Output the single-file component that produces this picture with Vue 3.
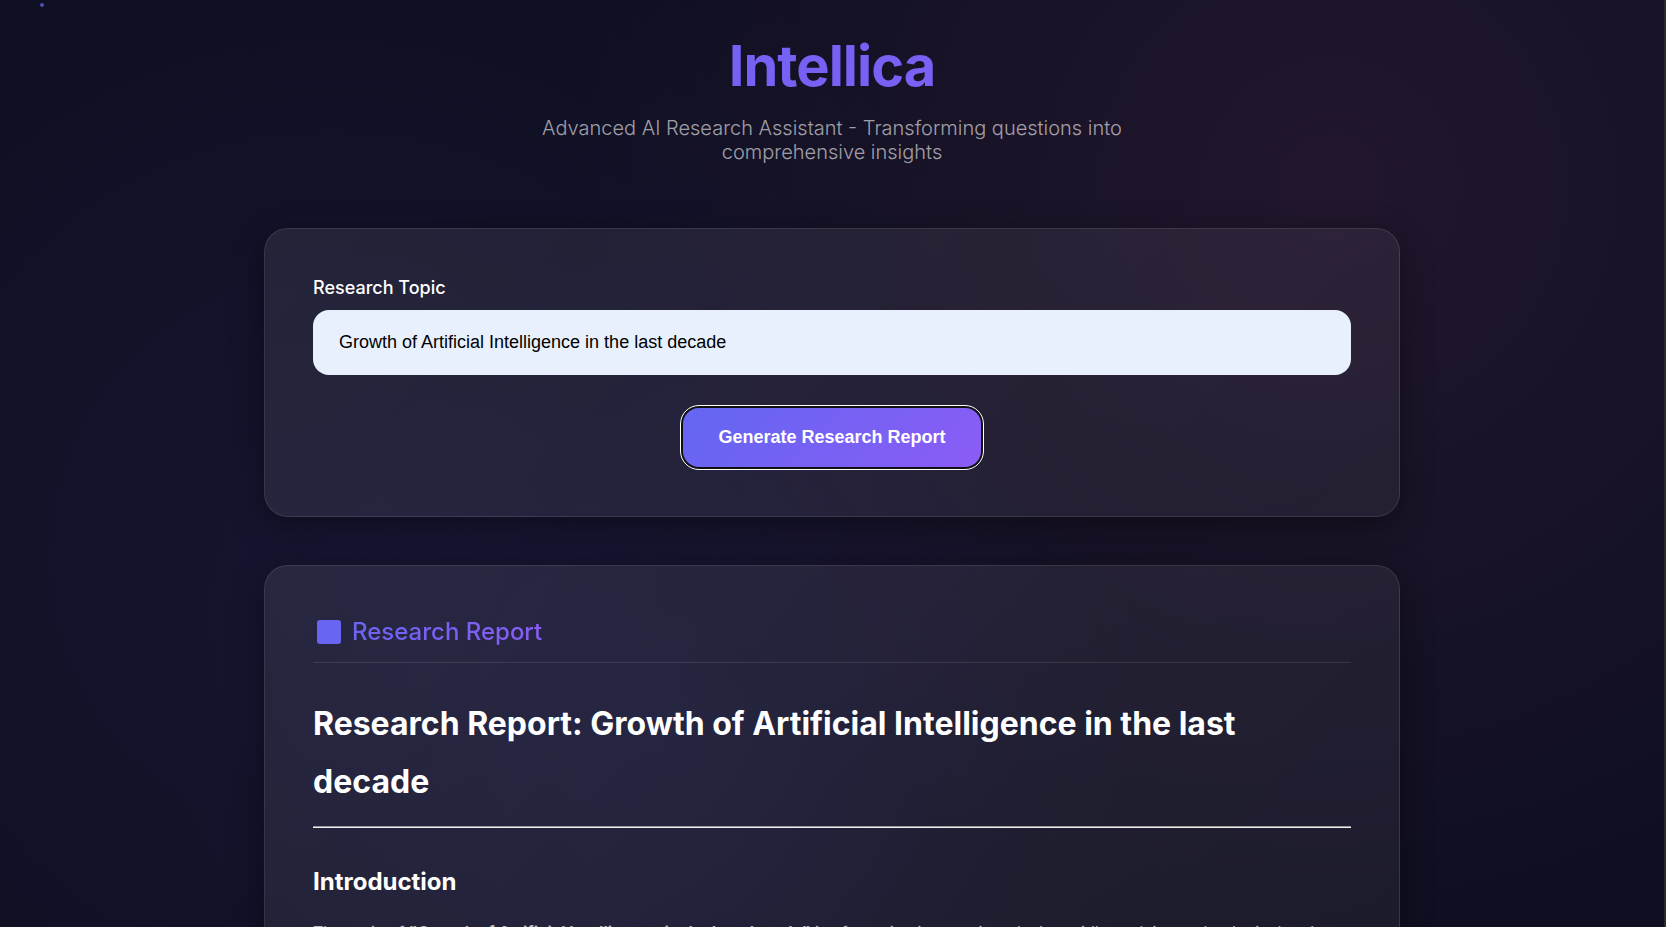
<script setup>
import { ref } from 'vue'

const topic = ref('Growth of Artificial Intelligence in the last decade')
</script>

<template>
  <div class="page">
    <span class="particle" aria-hidden="true"></span>
    <main class="container">
      <header class="hero">
        <h1 class="brand">Intellica</h1>
        <p class="tagline">Advanced AI Research Assistant - Transforming questions into comprehensive insights</p>
      </header>

      <section class="card">
        <form @submit.prevent>
          <label class="label" for="topic">Research Topic</label>
          <input id="topic" v-model="topic" class="topic" type="text" />
          <div class="actions">
            <button class="generate" type="submit">Generate Research Report</button>
          </div>
        </form>
      </section>

      <section class="card">
        <div class="report-header">
          <h2 class="report-title"><span class="report-icon" aria-hidden="true"></span>Research Report</h2>
        </div>
        <article class="report">
          <h1>Research Report: Growth of Artificial Intelligence in the last decade</h1>
          <hr />
          <h2>Introduction</h2>
          <p>The topic of <strong>"Growth of Artificial Intelligence in the last decade"</strong> is of growing interest in today's rapidly evolving technological and</p>
        </article>
      </section>
    </main>
  </div>
</template>

<style>
html,
body {
  height: 100%;
  overflow: hidden;
  background: #0f0f23;
}
</style>

<style scoped>
.page {
  position: relative;
  box-sizing: border-box;
  height: 100vh;
  overflow: hidden;
  border-right: 2px solid #2b2b2b;
  font-family: Inter, "Liberation Sans", sans-serif;
  color: #fff;
  background:
    radial-gradient(circle at 80% 20%, rgba(255, 110, 190, 0.08) 0%, transparent 50%),
    radial-gradient(circle at 20% 60%, rgba(100, 90, 240, 0.07) 0%, transparent 50%),
    radial-gradient(circle at 40% 80%, rgba(100, 90, 240, 0.06) 0%, transparent 40%),
    #0f0f21;
}

.particle {
  position: absolute;
  top: 3px;
  left: 40px;
  width: 4px;
  height: 4px;
  border-radius: 50%;
  background: #4f4db4;
}

.container {
  box-sizing: border-box;
  max-width: 1200px;
  margin: 0 auto;
  padding: 32px;
}

.hero {
  margin-bottom: 64px;
  text-align: center;
}

.brand {
  margin: 0 0 16px;
  font-size: 56px;
  line-height: 68px;
  font-weight: 700;
  letter-spacing: -1px;
  background: linear-gradient(135deg, #6366f1, #8b5cf6);
  background-clip: text;
  color: transparent;
}

.tagline {
  max-width: 600px;
  margin: 0 auto;
  font-size: 20px;
  line-height: 24px;
  font-weight: 300;
  color: rgba(255, 255, 255, 0.6);
}

.card {
  margin-bottom: 48px;
  padding: 48px;
  border: 1px solid rgba(255, 255, 255, 0.1);
  border-radius: 24px;
  background: linear-gradient(135deg, rgba(255, 255, 255, 0.08), rgba(255, 255, 255, 0.05));
  box-shadow: 0 8px 32px rgba(0, 0, 0, 0.4);
}

.label {
  display: block;
  margin-bottom: 12px;
  font-size: 18px;
  line-height: 21px;
  font-weight: 500;
}

.topic {
  display: block;
  box-sizing: border-box;
  width: 100%;
  height: 65px;
  padding: 0 26px;
  border: 0;
  border-radius: 16px;
  outline: 0;
  background: #e8f0fe;
  color: #000;
  font-family: "Liberation Sans", Arial, sans-serif;
  font-size: 18px;
}

.actions {
  display: flex;
  justify-content: center;
  margin-top: 33px;
}

.generate {
  padding: 18px 35px 19px;
  margin-bottom: 1px;
  border: 0;
  border-radius: 16px;
  outline: 1px solid #fff;
  outline-offset: 2px;
  background: linear-gradient(135deg, #6366f1, #8b5cf6);
  box-shadow: 0 0 0 2px #101010;
  color: #fff;
  font-family: "Liberation Sans", Arial, sans-serif;
  font-size: 18px;
  line-height: 22px;
  font-weight: 700;
}

.report-header {
  display: flex;
  margin-bottom: 32px;
  padding-bottom: 12px;
  border-bottom: 1px solid rgba(255, 255, 255, 0.1);
}

.report-title {
  margin: 0;
  font-size: 24px;
  line-height: 36px;
  font-weight: 500;
  background: linear-gradient(135deg, #6366f1, #8b5cf6);
  background-clip: text;
  color: transparent;
}

.report-icon {
  display: inline-block;
  width: 24px;
  height: 24px;
  margin: 0 11px 0 4px;
  border-radius: 3px;
  vertical-align: -4px;
  background: #6865f2;
}

.report {
  font-size: 16px;
  line-height: 29px;
  color: rgba(255, 255, 255, 0.7);
}

.report h1 {
  margin: 0;
  font-size: 32px;
  line-height: 58px;
  color: #fff;
}

.report hr {
  margin: 15px 0;
  border: 0;
  border-top: 1px solid #9c979a;
  border-bottom: 1px solid #eee;
}

.report h2 {
  margin: 32px 0 14px;
  font-size: 24px;
  line-height: 44px;
  color: #fff;
}

.report p {
  margin: 0;
}
</style>
